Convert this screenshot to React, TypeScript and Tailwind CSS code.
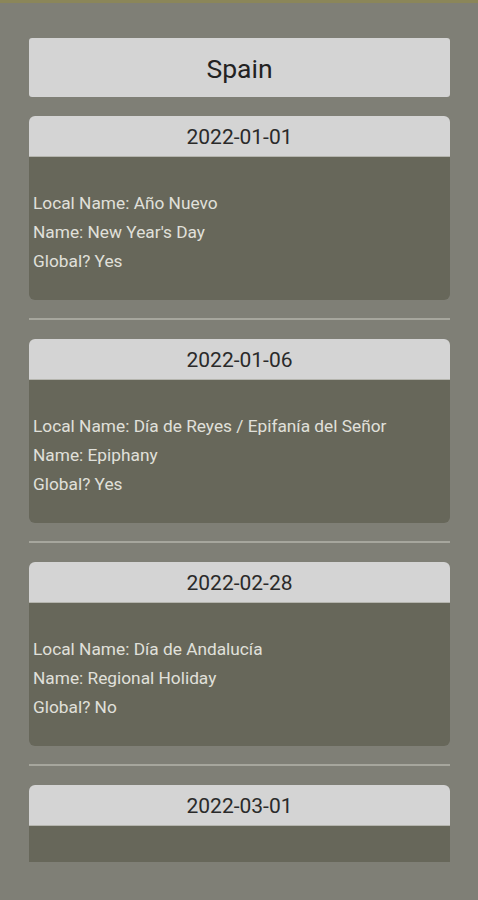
const holidays = [
  { date: "2022-01-01", localName: "Año Nuevo", name: "New Year's Day", global: "Yes" },
  { date: "2022-01-06", localName: "Día de Reyes / Epifanía del Señor", name: "Epiphany", global: "Yes" },
  { date: "2022-02-28", localName: "Día de Andalucía", name: "Regional Holiday", global: "No" },
  { date: "2022-03-01", localName: "Día de las Illes Balears", name: "Regional Holiday", global: "No" },
];

export default function App() {
  return (
    <main
      className="h-[900px] w-full overflow-hidden bg-[#7f7f76]"
      style={{ fontFamily: "Roboto, 'Liberation Sans', sans-serif" }}
    >
      <div className="h-[3px] bg-[#8b8659]" />
      <div className="pl-[29px] pr-[28px] pt-[35px]">
        <div className="flex h-[59px] items-center justify-center rounded-[3px] bg-[#d4d4d4] pt-[2px] text-[26.5px] text-[#222222]">
          Spain
        </div>

        <div className="mt-[19px] h-[746px] overflow-hidden">
          {holidays.map((h, i) => (
            <div key={h.date}>
              {i > 0 && <div className="mb-[19px] mt-[18px] h-[2px] bg-[#a6a69d]" />}
              <div className="overflow-hidden rounded-[6px]">
                <div className="flex h-[41px] items-center justify-center border-b border-[#b5b5ae] bg-[#d4d4d4] pt-[3px] text-[21px] text-[#2a2a2a]">
                  {h.date}
                </div>
                <div className="h-[143px] bg-[#67675a] px-[4px] pt-[32px] text-[17.3px] leading-[29px] text-[#e0e0da]">
                  <p>Local Name: {h.localName}</p>
                  <p>Name: {h.name}</p>
                  <p>Global? {h.global}</p>
                </div>
              </div>
            </div>
          ))}
        </div>
      </div>
    </main>
  );
}
